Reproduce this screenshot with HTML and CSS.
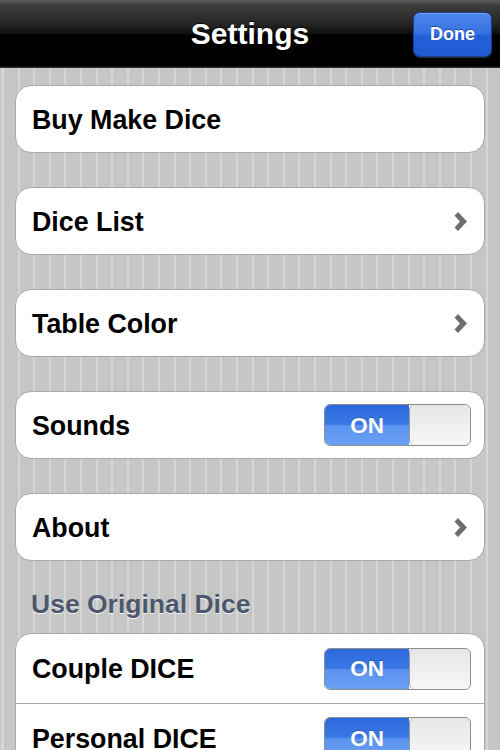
FILE: index.html
```html
<!DOCTYPE html>
<html>
<head>
<meta charset="utf-8">
<link rel="stylesheet" href="styles.css">
</head>
<body>
<div class="screen">
  <header class="navbar">
    <div></div>
    <h1 class="title">Settings</h1>
    <button class="done">Done</button>
  </header>
  <main class="content">
    <div class="card"><span class="label">Buy Make Dice</span></div>
    <div class="card"><span class="label">Dice List</span>
      <svg class="chevron" width="15" height="19" viewBox="0 0 15 19"><path d="M1.5 3.5 L5 0 L14 9.5 L5 19 L1.5 15.5 L7 9.5 Z" fill="#6e6e6e"/></svg>
    </div>
    <div class="card"><span class="label">Table Color</span>
      <svg class="chevron" width="15" height="19" viewBox="0 0 15 19"><path d="M1.5 3.5 L5 0 L14 9.5 L5 19 L1.5 15.5 L7 9.5 Z" fill="#6e6e6e"/></svg>
    </div>
    <div class="card"><span class="label">Sounds</span>
      <div class="switch"><span class="on">ON</span><span class="knob"></span></div>
    </div>
    <div class="card"><span class="label">About</span>
      <svg class="chevron" width="15" height="19" viewBox="0 0 15 19"><path d="M1.5 3.5 L5 0 L14 9.5 L5 19 L1.5 15.5 L7 9.5 Z" fill="#6e6e6e"/></svg>
    </div>
    <h2 class="section-title">Use Original Dice</h2>
    <div class="group">
      <div class="row"><span class="label">Couple DICE</span>
        <div class="switch"><span class="on">ON</span><span class="knob"></span></div>
      </div>
      <div class="row"><span class="label">Personal DICE</span>
        <div class="switch"><span class="on">ON</span><span class="knob"></span></div>
      </div>
    </div>
  </main>
</div>
</body>
</html>
```
FILE: styles.css
```css
* { box-sizing: border-box; }
html, body { margin: 0; padding: 0; }
body {
  width: 500px;
  height: 750px;
  overflow: hidden;
  font-family: "Liberation Sans", Arial, sans-serif;
  background: #c8c8c8;
}
.screen {
  width: 500px;
  height: 750px;
  overflow: hidden;
  background: repeating-linear-gradient(90deg, #d6d6d6 0, #d6d6d6 2px, #c6c6c6 2px, #c6c6c6 15.6px);
  background-position: 2px 0;
}
.navbar {
  height: 68px;
  display: grid;
  grid-template-columns: 1fr auto 1fr;
  align-items: center;
  background: linear-gradient(180deg, #5a5a5a 0%, #3c3c3c 8%, #262626 35%, #0e0e0e 50%, #000 51%, #000 97%, #3a3a3a 100%);
}
.title {
  margin: 0;
  color: #fff;
  font-size: 30px;
  font-weight: bold;
  text-shadow: 0 -1px 0 rgba(0,0,0,0.7);
}
.done {
  justify-self: end;
  margin-right: 8px;
  width: 79px;
  height: 45px;
  border-radius: 7px;
  border: 1px solid #153f96;
  background: linear-gradient(180deg, #4d86ea 0%, #3571e2 48%, #2361d8 52%, #1f5ad2 100%);
  box-shadow: 0 1px 0 rgba(255,255,255,0.18), inset 0 1px 0 rgba(255,255,255,0.25);
  color: #fff;
  font-family: "Liberation Sans", Arial, sans-serif;
  font-size: 18px;
  font-weight: bold;
  text-shadow: 0 -1px 0 rgba(0,0,0,0.35);
  padding: 0;
}
.content {
  padding: 17px 15px 0 15px;
  display: flex;
  flex-direction: column;
}
.card {
  height: 68px;
  margin-bottom: 34px;
  background: #fff;
  border: 1px solid #a8a8a8;
  border-radius: 16px;
  display: flex;
  align-items: center;
  justify-content: space-between;
  padding: 0 13px 0 16px;
}
.card:nth-child(5) { margin-bottom: 0; }
.label {
  font-size: 26.8px;
  font-weight: bold;
  color: #000;
  padding-top: 2px;
}
.chevron {
  margin-right: 3px;
}
.switch {
  width: 147px;
  height: 42px;
  display: flex;
  border-radius: 6px;
  border: 1px solid #8d8d8d;
  overflow: hidden;
}
.on {
  width: 84px;
  display: flex;
  align-items: center;
  justify-content: center;
  color: #fff;
  font-size: 22.5px;
  font-weight: bold;
  padding-top: 1px;
  text-shadow: 0 -1px 0 rgba(0,0,0,0.25);
  background: linear-gradient(180deg, #2c68dc 0%, #3a78e6 48%, #5b93ef 52%, #6aa0f4 100%);
}
.knob {
  flex: 1;
  border-left: 1px solid #9a9a9a;
  border-radius: 5px;
  background: linear-gradient(180deg, #e6e6e6 0%, #f7f7f7 100%);
}
.section-title {
  margin: 0;
  padding: 31px 0 17px 16px;
  height: 72px;
  line-height: 24px;
  font-size: 26.5px;
  font-weight: bold;
  color: #4c566c;
  text-shadow: 0 1px 0 rgba(255,255,255,0.9);
}
.group {
  background: #fff;
  border: 1px solid #a8a8a8;
  border-radius: 16px;
}
.row {
  height: 69px;
  display: flex;
  align-items: center;
  justify-content: space-between;
  padding: 0 13px 0 16px;
}
.row + .row {
  border-top: 1px solid #a8a8a8;
}
```
